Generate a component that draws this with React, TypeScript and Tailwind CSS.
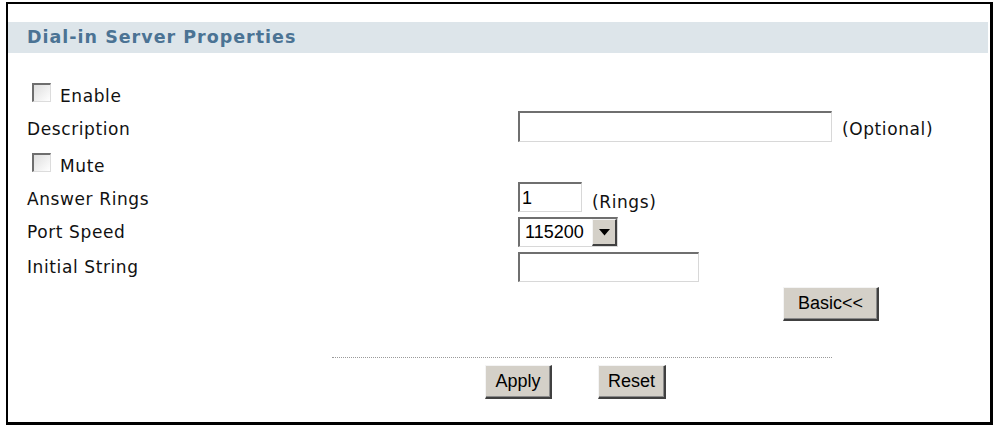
import React from "react";

const labelFont = "font-['DejaVu_Sans',Verdana,sans-serif] text-[17px] leading-[20px] tracking-[0.6px] text-[#111]";
const arial = "font-['Liberation_Sans',Arial,sans-serif]";

function Checkbox() {
  return (
    <div className="w-[19px] h-[19px] border-t-2 border-l-2 border-t-[#6e6e6e] border-l-[#6e6e6e] border-r border-b border-r-[#dcdcdc] border-b-[#dcdcdc] bg-gradient-to-br from-[#dedede] to-white" />
  );
}

function TextInput({ w, value }: { w: string; value?: string }) {
  return (
    <div
      className={`${w} h-[30px] border-t-2 border-l-2 border-t-[#6f6f6f] border-l-[#6f6f6f] border-r border-b border-r-[#d8d8d8] border-b-[#d8d8d8] bg-white flex items-end pb-[3px] pl-[2px] ${arial} text-[18px] leading-[20px] text-black`}
    >
      {value}
    </div>
  );
}

function Button({ label, w }: { label: string; w: string }) {
  return (
    <div
      className={`${w} h-[34px] bg-[#d4d0c8] border-t border-l border-t-[#f4f4f4] border-l-[#f4f4f4] border-r-2 border-b-2 border-r-[#404040] border-b-[#404040] shadow-[inset_-1px_-1px_0_#8a8a8a] flex items-center justify-center ${arial} text-[18px] text-black`}
    >
      {label}
    </div>
  );
}

export default function App() {
  return (
    <div className="w-[995px] h-[425px] bg-white pt-[2px] pl-[6px] overflow-hidden">
      <div className="w-[987px] h-[423px] border-l-2 border-t-2 border-r-[3px] border-b-[3px] border-black flex flex-col pr-[2px]">
        <div className="h-[18px] shrink-0" />
        <div className="h-[31px] shrink-0 bg-[#dde5ea] flex items-center pl-[19px]">
          <span className="font-['DejaVu_Sans',Verdana,sans-serif] font-bold text-[17.5px] tracking-[1px] text-[#4b7394]">
            Dial-in Server Properties
          </span>
        </div>

        <div className="flex flex-col pl-[19px]">
          <div className="h-[25px]" />
          {/* Enable */}
          <div className="h-[32px] flex items-start">
            <div className="ml-[5px] mt-[5px]">
              <Checkbox />
            </div>
            <span className={`${labelFont} ml-[9px] mt-[8px]`}>Enable</span>
          </div>
          {/* Description */}
          <div className="h-[33px] flex items-start">
            <span className={`${labelFont} w-[491px] mt-[9px]`}>Description</span>
            <div className="mt-[1px]">
              <div className="w-[314px] h-[31px] border-t-2 border-l-2 border-t-[#6f6f6f] border-l-[#6f6f6f] border-r border-b border-r-[#d8d8d8] border-b-[#d8d8d8] bg-white" />
            </div>
            <span className={`${labelFont} ml-[10px] mt-[9px]`}>(Optional)</span>
          </div>
          {/* Mute */}
          <div className="h-[38px] flex items-start">
            <div className="ml-[5px] mt-[10px]">
              <Checkbox />
            </div>
            <span className={`${labelFont} ml-[9px] mt-[13px]`}>Mute</span>
          </div>
          {/* Answer Rings */}
          <div className="h-[35px] flex items-start">
            <span className={`${labelFont} w-[491px] mt-[8px]`}>Answer Rings</span>
            <div className="mt-[1px]">
              <TextInput w="w-[64px]" value="1" />
            </div>
            <span className={`${labelFont} ml-[10px] mt-[11px]`}>(Rings)</span>
          </div>
          {/* Port Speed */}
          <div className="h-[35px] flex items-start">
            <span className={`${labelFont} w-[491px] mt-[6px]`}>Port Speed</span>
            <div className="mt-[1px] w-[100px] h-[30px] border-t-2 border-l-2 border-t-[#6f6f6f] border-l-[#6f6f6f] border-r border-b border-r-[#d8d8d8] border-b-[#d8d8d8] bg-white flex">
              <div className={`flex-1 flex items-center pl-[5px] ${arial} text-[18px] text-black`}>115200</div>
              <div className="w-[25px] h-full bg-[#d4d0c8] border-t border-l border-t-[#f4f4f4] border-l-[#f4f4f4] border-r-2 border-b-2 border-r-[#404040] border-b-[#404040] flex items-center justify-center">
                <svg width="11" height="7" viewBox="0 0 11 7">
                  <path d="M0 0 H11 L5.5 6.5 Z" fill="#000" />
                </svg>
              </div>
            </div>
          </div>
          {/* Initial String */}
          <div className="h-[35px] flex items-start">
            <span className={`${labelFont} w-[491px] mt-[6px]`}>Initial String</span>
            <div className="mt-[1px]">
              <TextInput w="w-[181px]" />
            </div>
          </div>
          {/* Basic button */}
          <div className="h-[35px] flex items-start">
            <div className="ml-[756px] mt-[1px]">
              <Button label="Basic<<" w="w-[96px]" />
            </div>
          </div>
          <div className="h-[36px]" />
          <div className="ml-[305px] w-[500px] border-t border-dotted border-[#9a9a9a]" />
          <div className="h-[7px]" />
          <div className="flex items-start">
            <div className="ml-[458px]">
              <Button label="Apply" w="w-[67px]" />
            </div>
            <div className="ml-[46px]">
              <Button label="Reset" w="w-[68px]" />
            </div>
          </div>
        </div>
      </div>
    </div>
  );
}
